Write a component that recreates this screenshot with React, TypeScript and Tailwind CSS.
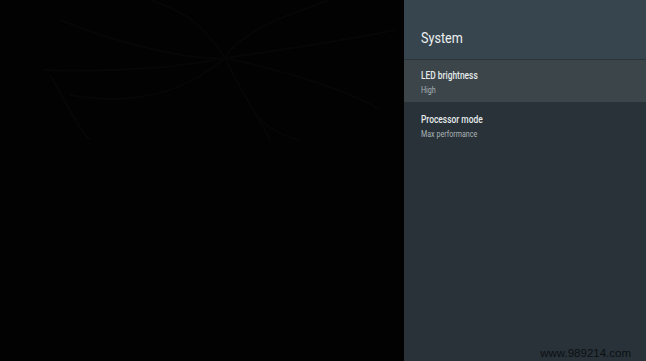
export default function App() {
  return (
    <div className="relative flex h-[361px] w-full overflow-hidden bg-black font-['Roboto',sans-serif]">
      {/* Backdrop */}
      <div className="relative flex-1 bg-[#020202]">
        <svg className="absolute inset-0 h-full w-full" viewBox="0 0 404 361" fill="none">
          <g stroke="#060606" strokeWidth="2">
            <path d="M225 58 C180 60 110 40 60 20" />
            <path d="M225 58 C175 68 110 72 45 70" />
            <path d="M225 58 C200 80 150 110 70 95" />
            <path d="M225 58 C240 30 300 10 330 0" />
            <path d="M225 58 C280 50 350 40 395 30" />
            <path d="M225 58 C280 70 350 90 380 110" />
            <path d="M225 58 C240 90 260 120 270 140" />
            <path d="M225 58 C200 20 180 10 150 0" />
            <path d="M50 75 C70 110 80 130 90 140" />
            <path d="M245 95 C255 120 275 135 300 140" />
          </g>
        </svg>
      </div>

      {/* Settings panel */}
      <div className="flex w-[242px] flex-col bg-[#283238]">
        <div className="flex h-[60px] items-end border-b border-[#2a3439] bg-[#37464e] pb-[13px] pl-[17px]">
          <span className="origin-left scale-x-[0.84] text-[15px] leading-none text-[#eef1f2]">System</span>
        </div>
        <div className="flex h-[42px] flex-col items-start bg-[#3b454a] pl-[17px] pt-[10px]">
          <span className="origin-left scale-x-[0.84] text-[10px] font-medium leading-[12px] text-[#e6eaeb]">LED brightness</span>
          <span className="mt-[3px] origin-left scale-x-[0.84] text-[8.5px] leading-[10px] text-[#aab3b7]">High</span>
        </div>
        <div className="flex flex-col items-start pl-[17px] pt-[12px]">
          <span className="origin-left scale-x-[0.84] text-[10px] font-medium leading-[12px] text-[#e6eaeb]">Processor mode</span>
          <span className="mt-[3px] origin-left scale-x-[0.84] text-[8.5px] leading-[10px] text-[#aab3b7]">Max performance</span>
        </div>
      </div>

      <span className="absolute bottom-[1px] right-[15px] font-['Liberation_Sans',sans-serif] text-[11.5px] leading-[14px] text-[#0c1013]">
        www.989214.com
      </span>
    </div>
  )
}
